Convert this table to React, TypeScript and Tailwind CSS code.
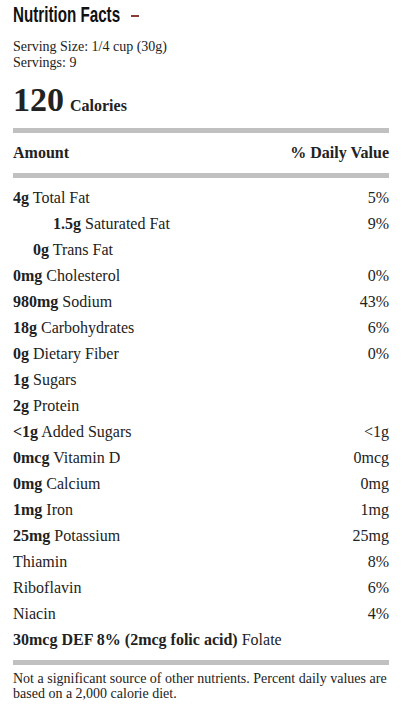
const rows: { amount: string; name: string; dv: string; indent?: number }[] = [
  { amount: '4g', name: 'Total Fat', dv: '5%' },
  { amount: '1.5g', name: 'Saturated Fat', dv: '9%', indent: 2 },
  { amount: '0g', name: 'Trans Fat', dv: '', indent: 1 },
  { amount: '0mg', name: 'Cholesterol', dv: '0%' },
  { amount: '980mg', name: 'Sodium', dv: '43%' },
  { amount: '18g', name: 'Carbohydrates', dv: '6%' },
  { amount: '0g', name: 'Dietary Fiber', dv: '0%' },
  { amount: '1g', name: 'Sugars', dv: '' },
  { amount: '2g', name: 'Protein', dv: '' },
  { amount: '<1g', name: 'Added Sugars', dv: '<1g' },
  { amount: '0mcg', name: 'Vitamin D', dv: '0mcg' },
  { amount: '0mg', name: 'Calcium', dv: '0mg' },
  { amount: '1mg', name: 'Iron', dv: '1mg' },
  { amount: '25mg', name: 'Potassium', dv: '25mg' },
  { amount: '', name: 'Thiamin', dv: '8%' },
  { amount: '', name: 'Riboflavin', dv: '6%' },
  { amount: '', name: 'Niacin', dv: '4%' },
  { amount: '30mcg DEF 8% (2mcg folic acid)', name: 'Folate', dv: '' },
]

export default function App() {
  return (
    <div className="min-h-[709px] bg-white text-[#222] font-['Liberation_Serif',serif]">
      <div className="ml-[13px] w-[376px] flex flex-col">
        {/* title - condensed face squeezed from Liberation Sans */}
        <div className="h-[32px] flex items-center">
          <div className="w-[106px] overflow-visible">
            <h1 className="inline-block whitespace-nowrap origin-left scale-x-[0.69] font-['Liberation_Sans',sans-serif] font-bold text-[22px] leading-[24px] text-[#111]">
              Nutrition Facts
            </h1>
          </div>
          <button className="ml-[12px] w-[8px] h-[2px] bg-[#8b3a3a]" aria-label="collapse" />
        </div>

        <div className="mt-[7px] text-[14px] leading-[16px]">
          <div>Serving Size: 1/4 cup (30g)</div>
          <div>Servings: 9</div>
        </div>

        <div className="mt-[12px] h-[34px] flex items-baseline">
          <span className="text-[34px] leading-[34px] font-bold">120</span>
          <span className="ml-[6px] text-[16px] font-bold">Calories</span>
        </div>

        <div className="mt-[11px] h-[5px] bg-[#c0c0c0]" />
        <div className="h-[40px] flex items-center justify-between text-[16px] font-bold">
          <span>Amount</span>
          <span>% Daily Value</span>
        </div>
        <div className="h-[5px] bg-[#c0c0c0]" />

        <div className="mt-[7px] flex flex-col text-[16px]">
          {rows.map((r, i) => (
            <div key={i} className="h-[26px] flex items-center justify-between">
              <span className={r.indent === 2 ? 'pl-[40px]' : r.indent === 1 ? 'pl-[20px]' : ''}>
                {r.amount && <b>{r.amount}</b>}
                {r.amount ? ' ' : ''}
                {r.name}
              </span>
              <span>{r.dv}</span>
            </div>
          ))}
        </div>

        <div className="mt-[7px] h-[5px] bg-[#c0c0c0]" />
        <p className="mt-[6px] text-[14px] leading-[15px]">
          Not a significant source of other nutrients. Percent daily values are based on a 2,000 calorie diet.
        </p>
      </div>
    </div>
  )
}
